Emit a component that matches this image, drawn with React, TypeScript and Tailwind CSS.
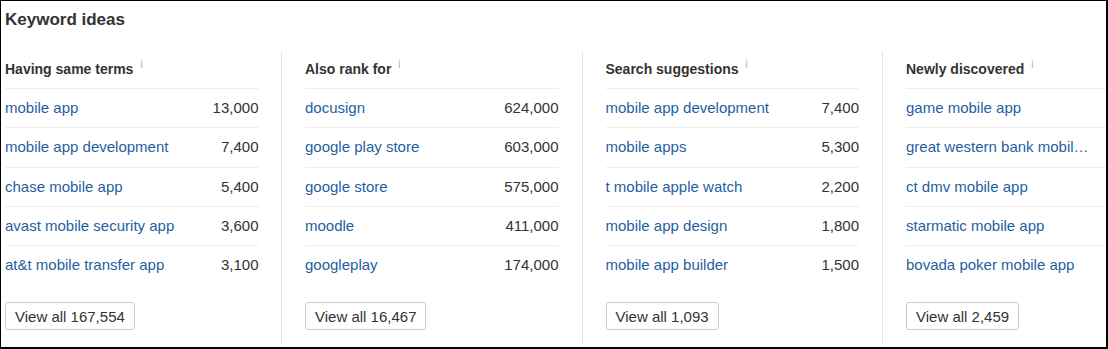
import React from 'react';

interface KeywordRow {
  keyword: string;
  volume?: string;
}

interface KeywordColumn {
  title: string;
  rows: KeywordRow[];
  total: string;
}

const columns: KeywordColumn[] = [
  {
    title: 'Having same terms',
    rows: [
      { keyword: 'mobile app', volume: '13,000' },
      { keyword: 'mobile app development', volume: '7,400' },
      { keyword: 'chase mobile app', volume: '5,400' },
      { keyword: 'avast mobile security app', volume: '3,600' },
      { keyword: 'at&t mobile transfer app', volume: '3,100' },
    ],
    total: '167,554',
  },
  {
    title: 'Also rank for',
    rows: [
      { keyword: 'docusign', volume: '624,000' },
      { keyword: 'google play store', volume: '603,000' },
      { keyword: 'google store', volume: '575,000' },
      { keyword: 'moodle', volume: '411,000' },
      { keyword: 'googleplay', volume: '174,000' },
    ],
    total: '16,467',
  },
  {
    title: 'Search suggestions',
    rows: [
      { keyword: 'mobile app development', volume: '7,400' },
      { keyword: 'mobile apps', volume: '5,300' },
      { keyword: 't mobile apple watch', volume: '2,200' },
      { keyword: 'mobile app design', volume: '1,800' },
      { keyword: 'mobile app builder', volume: '1,500' },
    ],
    total: '1,093',
  },
  {
    // volumes of this column sit past the panel edge in the screenshot
    title: 'Newly discovered',
    rows: [
      { keyword: 'game mobile app' },
      { keyword: 'great western bank mobile app' },
      { keyword: 'ct dmv mobile app' },
      { keyword: 'starmatic mobile app' },
      { keyword: 'bovada poker mobile app' },
    ],
    total: '2,459',
  },
];

function IdeasColumn({ column, first }: { column: KeywordColumn; first: boolean }) {
  return (
    <div
      className={
        first
          ? 'w-[280px] shrink-0 pl-[4px] pb-[14px]'
          : 'w-[300.5px] shrink-0 border-l border-[#e6e6e6] pl-[23px] pb-[14px]'
      }
    >
      <div className="w-[253.5px]">
        {/* Header */}
        <div className="h-[37px] flex items-center text-[14px] font-bold text-[#333]">
          {column.title}
          <span className="ml-[7px] relative -top-[5px] text-[10px] font-normal text-[#aaa] leading-none">
            i
          </span>
        </div>

        {/* Rows */}
        {column.rows.map((row) => (
          <div
            key={row.keyword}
            className="h-[39.33px] border-t border-[#eeeeee] flex items-center text-[15px]"
          >
            <a className="flex-1 min-w-0 truncate text-[#1f5f9f] cursor-pointer">{row.keyword}</a>
            <span className="w-[66px] shrink-0 text-right text-[#333]">{row.volume}</span>
          </div>
        ))}

        <button className="mt-[17px] h-[28px] px-[9px] pt-[2px] border border-[#cccccc] rounded-[3px] bg-white text-[15px] text-[#333] leading-none">
          View all {column.total}
        </button>
      </div>
    </div>
  );
}

export default function App() {
  return (
    <div
      className="w-[1108px] h-[349px] bg-white border-t border-l border-r-2 border-b-2 border-black overflow-hidden"
      style={{ fontFamily: '"Liberation Sans", Arial, sans-serif' }}
    >
      <h2 className="pt-[9px] pl-[4px] text-[17px] font-bold leading-[20px] text-[#333]">Keyword ideas</h2>
      <div className="mt-[21px] flex">
        {columns.map((column, i) => (
          <IdeasColumn key={column.title} column={column} first={i === 0} />
        ))}
      </div>
    </div>
  );
}
